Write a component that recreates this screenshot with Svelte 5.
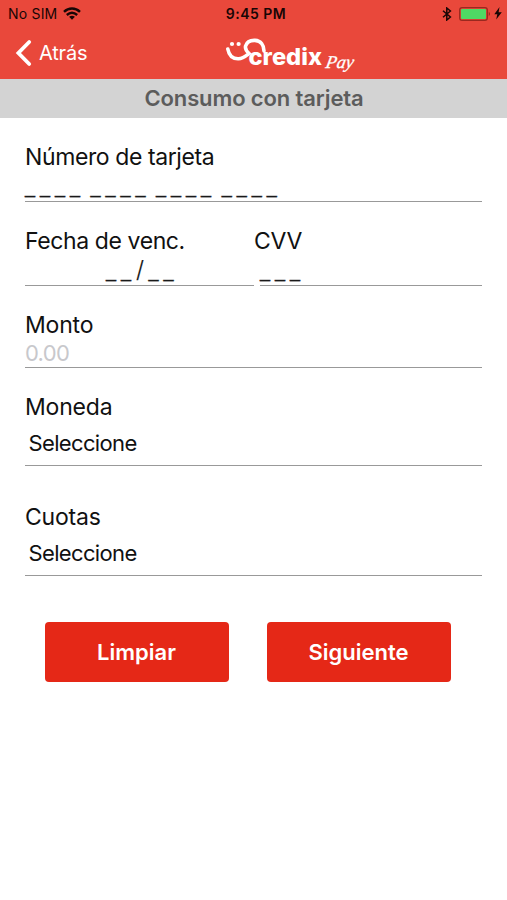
<script>
	let title = 'Consumo con tarjeta';
	let cardMask = '____ ____ ____ ____';
	let cvvMask = '___';
	let selects = [
		{ label: 'Moneda', value: 'Seleccione' },
		{ label: 'Cuotas', value: 'Seleccione' }
	];
</script>

<main>
	<header>
		<div class="status">
			<div class="carrier">
				<span>No SIM</span>
				<svg width="18" height="13" viewBox="0 0 18 13">
					<g fill="none" stroke="#180605" stroke-width="2.4">
						<path d="M1 4.8C5.6 .3 12.4 .3 17 4.8" />
						<path d="M3.8 8C7 5.2 11 5.2 14.2 8" />
					</g>
					<path fill="#180605" d="M6.1 9.8Q9 7.6 11.9 9.8L9 12.8z" />
				</svg>
			</div>
			<span class="time">9:45 PM</span>
			<div class="power">
				<svg width="10" height="14" viewBox="0 0 10 14">
					<path fill="none" stroke="#180605" stroke-width="1.5" d="M1 3.7L8.4 10L4.8 13V1L8.4 4L1 10.3" />
				</svg>
				<svg class="battery" width="32" height="14" viewBox="0 0 32 14">
					<rect x=".7" y=".7" width="27.6" height="12.6" rx="2.4" fill="none" stroke="#99291f" stroke-width="1.3" />
					<rect x="2" y="2" width="25" height="10" rx="1" fill="#4fd964" />
					<path fill="#812019" d="M29.8 4.8q2 2.2 0 4.4z" />
				</svg>
				<svg width="8" height="13" viewBox="0 0 8 13">
					<path fill="#180605" d="M5.5 0L.3 7.2H3.3L2.2 12.5L7.8 5.3H4.6z" />
				</svg>
			</div>
		</div>
		<nav>
			<button class="back">
				<svg width="17" height="28" viewBox="0 0 17 28">
					<path fill="none" stroke="#fff" stroke-width="3.8" stroke-linecap="round" d="M14.2 3L3.4 14L14.2 25" />
				</svg>
				<span>Atrás</span>
			</button>
			<svg class="logo" width="134" height="40" viewBox="0 0 134 40">
				<path
					fill="none"
					stroke="#fff"
					stroke-width="3.6"
					stroke-linecap="round"
					d="M4.8 14C6 20.5 10 24 15.5 23.8C20 23.6 23 20.8 26 18.5C23.5 16 21.8 13.8 22.6 11C23.8 7 27.5 5.2 32 5.4C37.8 5.8 41 10 41 16"
				/>
				<circle cx="9" cy="9" r="2.1" fill="#fff" />
				<circle cx="15.6" cy="9" r="2.1" fill="#fff" />
				<text class="brand" x="25.5" y="30" textLength="73.5" lengthAdjust="spacingAndGlyphs">credix</text>
				<text class="pay" x="0" y="0" textLength="28" lengthAdjust="spacingAndGlyphs" transform="translate(102 32.5) skewX(-10)">Pay</text>
			</svg>
		</nav>
	</header>

	<h1>{title}</h1>

	<form>
		<div class="field card">
			<span class="label">Número de tarjeta</span>
			<span class="mask">{cardMask}</span>
		</div>
		<div class="row">
			<div class="field expiry">
				<span class="label">Fecha de venc.</span>
				<span class="mask date">__<i>/</i>__</span>
			</div>
			<div class="field cvv">
				<span class="label">CVV</span>
				<span class="mask">{cvvMask}</span>
			</div>
		</div>
		<div class="field amount">
			<span class="label">Monto</span>
			<span class="placeholder">0.00</span>
		</div>
		{#each selects as item}
			<div class="field select">
				<span class="label">{item.label}</span>
				<span class="value">{item.value}</span>
			</div>
		{/each}
		<div class="actions">
			<button type="button">Limpiar</button>
			<button type="button">Siguiente</button>
		</div>
	</form>
</main>

<style>
	:global(body) {
		margin: 0;
		background: #fff;
	}

	main {
		width: 507px;
		height: 900px;
		overflow: hidden;
		background: #fff;
		color: #111;
		font-family: Inter, 'Liberation Sans', sans-serif;
	}

	header {
		height: 79px;
		background: #e9483b;
	}

	.status {
		display: grid;
		grid-template-columns: 1fr auto 1fr;
		align-items: center;
		height: 27px;
		padding: 0 5px 0 8px;
		color: #180605;
		font-size: 14px;
	}

	.carrier,
	.power {
		display: flex;
		align-items: center;
	}

	.carrier {
		gap: 6px;
		letter-spacing: 0.2px;
	}

	.time {
		padding-left: 2px;
		font-weight: 600;
		letter-spacing: 0.5px;
	}

	.power {
		justify-content: flex-end;
	}

	.battery {
		margin: 0 3px 0 7px;
	}

	nav {
		display: flex;
		height: 52px;
	}

	.back {
		display: flex;
		align-items: center;
		gap: 7px;
		width: 208px;
		height: 51px;
		padding: 0;
		margin-left: 15px;
		border: 0;
		background: none;
		color: #fff;
		font: 20px Inter, sans-serif;
		letter-spacing: -0.2px;
	}

	.logo {
		margin-top: 8px;
	}

	.brand {
		fill: #fff;
		font: 800 23px Inter, sans-serif;
	}

	.pay {
		fill: #fff;
		stroke: #fff;
		stroke-width: 0.3;
		font: italic 18px 'Liberation Serif', serif;
	}

	h1 {
		height: 39px;
		margin: 0;
		padding-left: 1px;
		background: #d3d3d3;
		color: #5c5c5c;
		font-size: 22px;
		font-weight: 600;
		letter-spacing: -0.12px;
		line-height: 39px;
		text-align: center;
	}

	form {
		padding: 0 25px;
	}

	.field {
		display: flex;
		flex-direction: column;
		box-sizing: border-box;
		height: 84px;
		padding-top: 24px;
		border-bottom: 1px solid #999;
	}

	.label {
		height: 30px;
		font-size: 23px;
		letter-spacing: -0.4px;
		line-height: 31px;
		white-space: nowrap;
	}

	.cvv .label,
	.amount .label,
	.select .label {
		letter-spacing: -0.2px;
	}

	.mask {
		height: 28px;
		padding-top: 1px;
		font: 18px/28px 'Liberation Sans', sans-serif;
		letter-spacing: 5px;
		word-spacing: -4.5px;
		white-space: nowrap;
		-webkit-text-stroke: 0.4px #333;
	}

	.row {
		display: flex;
	}

	.expiry {
		width: 229px;
	}

	.date {
		padding-left: 81px;
	}

	.date i {
		position: relative;
		top: 1px;
		font: 300 23px/20px Inter, sans-serif;
		letter-spacing: 4.5px;
		-webkit-text-stroke: 0.2px #222;
	}

	.cvv {
		flex: 1;
		margin-left: 6px;
	}

	.cvv .label {
		margin-left: -6px;
	}

	.amount {
		height: 82px;
	}

	.placeholder {
		color: #c8c8cc;
		font-size: 22px;
		letter-spacing: -0.7px;
		line-height: 26px;
	}

	.select {
		height: 98px;
	}

	.select + .select {
		height: 110px;
		padding-top: 36px;
	}

	.value {
		padding: 6px 0 0 3.5px;
		font-size: 22px;
		letter-spacing: -0.65px;
		line-height: 30px;
	}

	.actions {
		display: flex;
		gap: 38px;
		padding: 46px 0 0 19.5px;
	}

	.actions button {
		width: 184px;
		height: 60px;
		padding: 0;
		border: 0;
		border-radius: 4px;
		background: #e52817;
		color: #fff;
		font: 600 22px Inter, sans-serif;
	}
</style>
